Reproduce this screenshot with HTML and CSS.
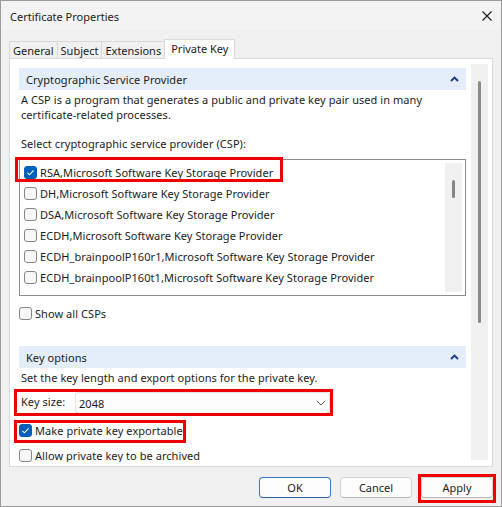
FILE: index.html
```html
<!DOCTYPE html>
<html lang="en">
<head>
<meta charset="utf-8">
<title>Certificate Properties</title>
<link rel="stylesheet" href="styles.css">
</head>
<body>
<div class="window">
  <div class="titlebar">
    <span class="title">Certificate Properties</span>
    <svg class="close" width="10" height="10" viewBox="0 0 10 10" aria-label="Close">
      <path d="M0.5 0.5L9.5 9.5M9.5 0.5L0.5 9.5" stroke="#1a1a1a" stroke-width="1.1" fill="none"/>
    </svg>
  </div>

  <div class="tabs">
    <div class="tab">General</div>
    <div class="tab">Subject</div>
    <div class="tab">Extensions</div>
    <div class="tab active">Private Key</div>
  </div>

  <div class="panel">
    <div class="pane">
      <div class="section-head">
        <span>Cryptographic Service Provider</span>
        <svg class="chev-up" width="9" height="6" viewBox="0 0 9 6"><path d="M1 5L4.5 1.6L8 5" stroke="#1b3b8f" stroke-width="2" fill="none"/></svg>
      </div>
      <p class="text desc">A CSP is a program that generates a public and private key pair used in many<br>certificate-related processes.</p>
      <p class="text select-label">Select cryptographic service provider (CSP):</p>

      <div class="listbox">
        <div class="items">
          <div class="item"><span class="opt callout rsa"><span class="check on"><svg width="11" height="11" viewBox="0 0 11 11"><path d="M2.4 5.8L4.5 7.8L8.6 3.4" stroke="#fff" stroke-width="1.1" fill="none"/></svg></span>RSA,Microsoft Software Key Storage Provider</span></div>
          <div class="item"><span class="opt"><span class="check"></span>DH,Microsoft Software Key Storage Provider</span></div>
          <div class="item"><span class="opt"><span class="check"></span>DSA,Microsoft Software Key Storage Provider</span></div>
          <div class="item"><span class="opt"><span class="check"></span>ECDH,Microsoft Software Key Storage Provider</span></div>
          <div class="item"><span class="opt"><span class="check"></span>ECDH_brainpoolP160r1,Microsoft Software Key Storage Provider</span></div>
          <div class="item"><span class="opt"><span class="check"></span>ECDH_brainpoolP160t1,Microsoft Software Key Storage Provider</span></div>
        </div>
        <div class="mini-scroll"><div class="mini-thumb"></div></div>
      </div>

      <div class="row show-all"><span class="opt"><span class="check"></span>Show all CSPs</span></div>

      <div class="section-head key-head">
        <span>Key options</span>
        <svg class="chev-up" width="9" height="6" viewBox="0 0 9 6"><path d="M1 5L4.5 1.6L8 5" stroke="#1b3b8f" stroke-width="2" fill="none"/></svg>
      </div>
      <p class="text key-desc">Set the key length and export options for the private key.</p>

      <div class="keysize callout">
        <span class="keysize-label">Key size:</span>
        <div class="combo">
          <span>2048</span>
          <svg width="10" height="6" viewBox="0 0 10 6"><path d="M0.8 0.8L5 5L9.2 0.8" stroke="#5f5f5f" stroke-width="1" fill="none"/></svg>
        </div>
      </div>

      <div class="row exportable"><span class="opt callout"><span class="check on"><svg width="11" height="11" viewBox="0 0 11 11"><path d="M2.4 5.8L4.5 7.8L8.6 3.4" stroke="#fff" stroke-width="1.1" fill="none"/></svg></span>Make private key exportable</span></div>
      <div class="row archived"><span class="opt"><span class="check"></span>Allow private key to be archived</span></div>
    </div>
    <div class="vscroll"><div class="vthumb"></div></div>
  </div>

  <div class="buttons">
    <button class="btn default">OK</button>
    <button class="btn">Cancel</button>
    <button class="btn callout apply">Apply</button>
  </div>
</div>
</body>
</html>
```

FILE: styles.css
```css
* { box-sizing: border-box; }

html, body {
  margin: 0;
  padding: 0;
  background: #ffffff;
}

body {
  font-family: "Noto Sans", "Liberation Sans", sans-serif;
  font-size: 11px;
  color: #1b1b1b;
}

/* dialog frame */
.window {
  width: 502px;
  height: 507px;
  border: 1px solid #9a9a9a;
  background: #f0f0f0;
  display: flex;
  flex-direction: column;
}

.titlebar {
  height: 29px;
  flex: none;
  background: #f3f3f3;
  display: flex;
  align-items: center;
  justify-content: space-between;
  padding: 1px 9px 0 9px;
}

/* tab strip */
.tabs {
  height: 28px;
  flex: none;
  display: flex;
  align-items: flex-end;
  padding-left: 8px;
}

.tab {
  height: 17px;
  display: flex;
  align-items: center;
  padding: 0 3px;
  margin-right: -1px;
  border: 1px solid #d9d9d9;
  border-bottom: none;
  background: #f0f0f0;
}

.tab.active {
  height: 20px;
  margin-bottom: -1px;
  padding: 0 6px 2px;
  background: #ffffff;
  position: relative;
  z-index: 1;
}

/* tab page */
.panel {
  flex: none;
  height: 409px;
  margin: 0 8px;
  border: 1px solid #d9d9d9;
  background: #ffffff;
  display: flex;
  align-items: flex-start;
}

.pane {
  width: 456px;
  height: 403px;
  overflow: hidden;
  padding: 9px 0 0 9px;
  letter-spacing: 0.06px;
}

.vscroll {
  width: 17px;
  height: 396px;
  margin: 5px 4px 0 5px;
  background: #f0f0f0;
  padding-top: 17px;
}

.vthumb {
  width: 3px;
  height: 242px;
  margin-left: 7px;
  border-radius: 2px;
  background: #8a8a8a;
}

.section-head {
  height: 22px;
  background: #e3eefa;
  display: flex;
  align-items: center;
  justify-content: space-between;
  padding: 0 7px;
}

.text {
  margin: 0;
  padding-left: 2px;
  line-height: 15px;
}

.desc { margin-top: 2px; }
.select-label { margin-top: 14px; }

/* provider list */
.listbox {
  margin-top: 8px;
  height: 137px;
  border: 1px solid #8d8d8d;
  display: flex;
}

.items {
  flex: 1;
  padding: 2px 0 0 4px;
  white-space: nowrap;
}

.item {
  height: 21px;
  display: flex;
  align-items: center;
}

.mini-scroll {
  width: 17px;
  margin: 3px 3px 3px 0;
  background: #f0f0f0;
  padding-top: 17px;
}

.mini-thumb {
  width: 3px;
  height: 18px;
  margin-left: 7px;
  border-radius: 2px;
  background: #858585;
}

/* checkbox + caption */
.opt {
  display: inline-flex;
  align-items: center;
  line-height: 15px;
}

.check {
  width: 13px;
  height: 13px;
  margin-right: 3px;
  border: 1px solid #858585;
  border-radius: 3px;
  background: #f7f7f7;
  display: inline-flex;
  align-items: center;
  justify-content: center;
}

.check.on {
  background: #005fb8;
  border-color: #005fb8;
}

.row {
  height: 15px;
  display: flex;
  align-items: center;
}

.show-all { margin-top: 10px; }
.key-head { margin-top: 25px; }
.key-desc { margin-top: 2px; }

/* key size combobox */
.keysize {
  width: 311px;
  margin-top: 7px;
  padding-left: 2px;
  display: flex;
  align-items: flex-start;
}

.keysize-label {
  flex: 1;
  padding-top: 2px;
  line-height: 15px;
}

.combo {
  width: 255px;
  height: 22px;
  border: 1px solid #e3e3e3;
  border-bottom-color: #8a8a8a;
  border-radius: 4px;
  background: #fdfdfd;
  display: flex;
  align-items: center;
  justify-content: space-between;
  padding: 0 3px 0 3px;
}

.exportable { margin-top: 9px; }
.archived { margin-top: 10px; }

/* dialog buttons */
.buttons {
  flex: none;
  display: flex;
  justify-content: flex-end;
  gap: 9px;
  padding: 10px 8px 0 0;
}

.btn {
  width: 72px;
  height: 21px;
  padding: 0;
  font: inherit;
  color: #1b1b1b;
  background: #fdfdfd;
  border: 1px solid #d3d3d3;
  border-bottom-color: #b8b8b8;
  border-radius: 4px;
}

.btn.default {
  border-color: #3c78c8;
  border-bottom-color: #2a62b0;
}

/* red annotation frames */
.callout { position: relative; }

.callout::after {
  content: "";
  position: absolute;
  border: 3px solid #ee0000;
  pointer-events: none;
}

.rsa::after { left: -9px; right: -10px; top: -8px; bottom: -2px; }
.keysize::after { left: -5px; right: -3px; top: -3px; bottom: -2px; }
.exportable .callout::after { left: -5px; right: -3px; top: -3px; bottom: -5px; }
.apply::after { left: -4px; right: -4px; top: -4px; bottom: -6px; }
```
